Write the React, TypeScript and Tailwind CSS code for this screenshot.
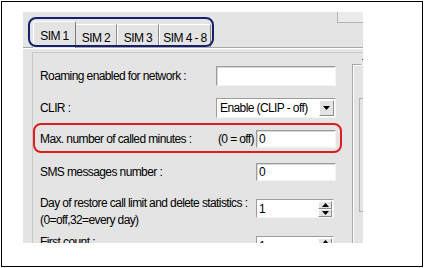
import React from "react";

const font = { fontFamily: "'Liberation Sans', Arial, sans-serif" };

function TextBox({ value = "", w = "w-[80px]", h = "h-[18px]" }: { value?: string; w?: string; h?: string }) {
  return (
    <div className={`${w} ${h} bg-white border border-t-[#9c9c9c] border-l-[#9c9c9c] border-b-[#f4f4f4] border-r-[#f4f4f4] shadow-[inset_1px_1px_0_#d8d8d8] flex items-center pl-[2px] text-[12px] text-black`}>
      {value}
    </div>
  );
}

function Spin({ value }: { value: string }) {
  return (
    <div className="w-[78px] h-[19px] bg-white border border-t-[#9c9c9c] border-l-[#9c9c9c] border-b-[#f4f4f4] border-r-[#f4f4f4] flex items-center pl-[2px] text-[12px]">
      <span className="flex-1">{value}</span>
      <div className="w-[14px] h-[16px] mr-px flex flex-col">
        <div className="flex-1 bg-[#e4e4e4] border border-t-white border-l-white border-b-[#8c8c8c] border-r-[#8c8c8c] flex items-center justify-center">
          <svg width="7" height="4" viewBox="0 0 7 4"><path d="M3.5 0L7 4H0z" fill="#000" /></svg>
        </div>
        <div className="flex-1 bg-[#e4e4e4] border border-t-white border-l-white border-b-[#8c8c8c] border-r-[#8c8c8c] flex items-center justify-center">
          <svg width="7" height="4" viewBox="0 0 7 4"><path d="M0 0H7L3.5 4z" fill="#000" /></svg>
        </div>
      </div>
    </div>
  );
}

export default function App() {
  return (
    <div className="w-[428px] h-[268px] bg-white pt-px pl-px overflow-hidden text-black" style={font}>
      <div className="w-[422px] h-[266px] border border-black pl-[21px] pt-[10px]">
        <div className="relative w-[340px] h-[231px] bg-[#e4e4e4] overflow-hidden text-[12px] tracking-[-0.6px] whitespace-nowrap">
          {/* top-right stub */}
          <div className="absolute left-[314px] top-0 w-[30px] h-[11px] bg-[#ebebeb] border-l border-b border-[#b4b4b4]" />

          {/* tab strip */}
          <div className="flex items-end h-[35px] pl-[10px] pt-[8px]">
            <div className="w-[43px] h-[27px] bg-[#e4e4e4] border-l border-t border-white border-r border-r-[#7c7c7c] rounded-tl-[2px] rounded-tr-[2px] flex justify-center pt-[5px] z-10 -mb-px">
              SIM 1
            </div>
            <div className="w-[41px] h-[23px] border-t border-white border-r border-r-[#8c8c8c] flex justify-center pt-[4px]">SIM 2</div>
            <div className="w-[42px] h-[23px] border-t border-l border-white border-r border-r-[#8c8c8c] flex justify-center pt-[4px]">SIM 3</div>
            <div className="w-[52px] h-[23px] border-t border-l border-white border-r border-r-[#8c8c8c] flex justify-center pt-[4px]">SIM 4 - 8</div>
          </div>

          {/* panel */}
          <div className="border-t border-[#a8a8a8] shadow-[inset_0_1px_0_#ffffff] h-[196px] pl-[9px] pt-[4px]">
            <div className="border-t border-l border-[#c8c8c8] h-full">
              <div className="flex flex-col pt-[13px] w-[303px]">
                <div className="flex items-center justify-between h-[20px] pl-[7px]">
                  <span>Roaming enabled for network :</span>
                  <TextBox w="w-[120px]" h="h-[20px]" />
                </div>
                <div className="flex items-center justify-between h-[20px] pl-[7px] mt-[12px]">
                  <span>CLIR :</span>
                  <div className="w-[120px] h-[20px] bg-white border border-t-[#9c9c9c] border-l-[#9c9c9c] border-b-[#f4f4f4] border-r-[#f4f4f4] flex items-center pl-[3px]">
                    <span className="flex-1">Enable (CLIP - off)</span>
                    <div className="w-[15px] h-[16px] mr-px bg-[#e4e4e4] border border-t-white border-l-white border-b-[#8c8c8c] border-r-[#8c8c8c] flex items-center justify-center">
                      <svg width="7" height="4" viewBox="0 0 7 4"><path d="M0 0H7L3.5 4z" fill="#000" /></svg>
                    </div>
                  </div>
                </div>
                <div className="flex items-center justify-between h-[18px] pl-[7px] mt-[12px]">
                  <span>Max. number of called minutes :</span>
                  <div className="flex items-center gap-[2px]">
                    <span>(0 = off)</span>
                    <TextBox value="0" />
                  </div>
                </div>
                <div className="flex items-center justify-between h-[18px] pl-[7px] mt-[15px]">
                  <span>SMS messages number :</span>
                  <TextBox value="0" />
                </div>
                <div className="flex items-start justify-between pl-[7px] mt-[14px]">
                  <span className="leading-[17px]">
                    Day of restore call limit and delete statistics :<br />(0=off,32=every day)
                  </span>
                  <div className="mt-[4px] mr-[2px]">
                    <Spin value="1" />
                  </div>
                </div>
                <div className="flex items-start justify-between pl-[7px] mt-[5px]">
                  <span className="leading-[17px]">First count :</span>
                  <div className="mt-[2px] mr-[2px]">
                    <Spin value="1" />
                  </div>
                </div>
              </div>
            </div>
          </div>

          {/* right group box, clipped */}
          <div className="absolute left-[329px] top-[52px] w-[20px] h-[200px] border-l border-t border-[#a8a8a8] shadow-[inset_1px_1px_0_#ffffff]">
            <span className="absolute left-[8px] -top-[8px] leading-[14px] bg-[#e4e4e4] px-px">T</span>
            <div className="absolute left-[6px] top-[33px] w-[20px] h-[114px] border-l border-t border-b border-[#b0b0b0]" />
          </div>

          {/* annotations */}
          <div className="absolute left-[5px] top-[5px] w-[186px] h-[30px] border-2 border-[#15206e] rounded-[8px] z-20" />
          <div className="absolute left-[10px] top-[111px] w-[309px] h-[30px] border-2 border-[#dc1e1e] rounded-[8px] z-20" />
        </div>
      </div>
    </div>
  );
}
